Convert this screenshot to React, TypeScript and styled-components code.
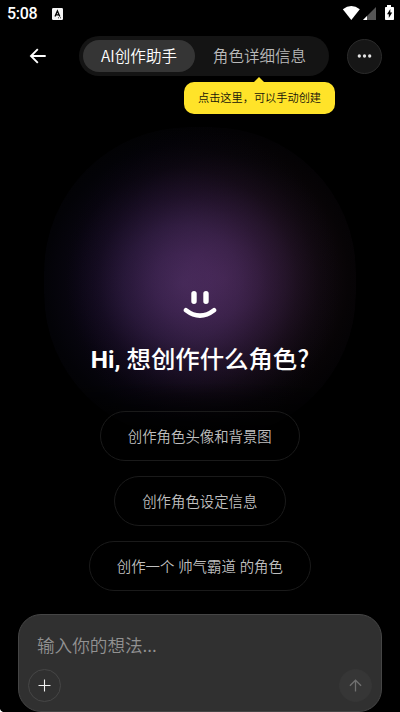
import React from 'react';
import styled, { createGlobalStyle } from 'styled-components';

const GlobalStyle = createGlobalStyle`
  *, *::before, *::after { box-sizing: border-box; }
  body {
    margin: 0;
    background: #000;
    font-family: Roboto, "Noto Sans CJK SC", sans-serif;
    overflow: hidden;
  }
  button { font: inherit; margin: 0; padding: 0; border: 0; background: none; color: inherit; white-space: nowrap; }
`;

const Screen = styled.div`
  position: relative;
  isolation: isolate;
  width: 400px;
  height: 712px;
  overflow: hidden;
  background: #000;
  color: #fff;
  display: flex;
  flex-direction: column;
`;

const Glow = styled.div`
  position: absolute;
  z-index: -1;
  left: 44px;
  top: 127px;
  width: 312px;
  height: 312px;
  border-radius: 145px;
  background:
    radial-gradient(circle 160px at 138px 156px, #291a42 0%, #24163c 18%, #1b1130 36%, #0f091d 54%, #06040d 72%, #020206 86%, #010102 100%),
    radial-gradient(circle 160px at 180px 152px, #2a1526 0%, #241220 22%, #1b0e17 40%, #10080c 58%, #060304 78%, #020102 92%, #010101 100%);
  background-blend-mode: screen;
  mask-image: linear-gradient(#000 82%, transparent 100%);
`;

const StatusBar = styled.header`
  height: 28px;
  display: flex;
  align-items: center;
  padding: 0 6px 0 7px;
`;

const Clock = styled.span`
  width: 45px;
  font-size: 16px;
  font-weight: 500;
  line-height: 28px;
  letter-spacing: -0.3px;
`;

const StatusIcons = styled.div`
  margin-left: auto;
  display: flex;
  height: 28px;
`;

const NavBar = styled.nav`
  height: 56px;
  display: flex;
  align-items: center;
  padding: 0 18px 0 27px;
`;

const BackButton = styled.button`
  display: flex;
  width: 52px;
  height: 22px;
`;

const Tabs = styled.div`
  position: relative;
  display: flex;
  width: 250px;
  height: 40px;
  padding: 4px;
  border-radius: 20px;
  background: #141414;
`;

const Tab = styled.button<{ $active?: boolean }>`
  width: ${p => (p.$active ? 112 : 130)}px;
  padding: 0 ${p => (p.$active ? 0 : 1)}px 2px 0;
  height: 32px;
  line-height: 30px;
  border-radius: 16px;
  font-family: "Noto Sans CJK SC", sans-serif;
  font-size: 15.55px;
  font-weight: 350;
  color: ${p => (p.$active ? '#fff' : '#b9b9b9')};
  background: ${p => (p.$active ? '#353535' : 'transparent')};
`;

const Tooltip = styled.div`
  position: absolute;
  left: 105px;
  top: 46px;
  width: 151px;
  height: 32px;
  border-radius: 10px;
  background: #ffe329;
  color: #15130a;
  font-size: 11.2px;
  font-weight: 350;
  line-height: 34px;
  text-align: center;
  white-space: nowrap;
  &::before {
    content: '';
    position: absolute;
    left: 70px;
    top: -5px;
    border: 5px solid transparent;
    border-top: 0;
    border-bottom-color: #ffe329;
  }
`;

const MoreButton = styled.button`
  margin-left: auto;
  width: 35px;
  height: 35px;
  border: 1px solid #2b2b2b;
  border-radius: 50%;
  background: #161616;
  display: flex;
  align-items: center;
  justify-content: center;
`;

const Hero = styled.main`
  flex: 1;
  display: flex;
  flex-direction: column;
  align-items: center;
  padding-top: 205px;
`;

const Title = styled.h1`
  margin: 21px 0 0;
  height: 40px;
  line-height: 36px;
  font-family: "Noto Sans CJK SC", sans-serif;
  font-size: 24.4px;
  font-weight: 500;
  white-space: nowrap;
`;

const Greeting = styled.span`
  font-family: Roboto, sans-serif;
  font-weight: 700;
`;

const Suggestions = styled.div`
  margin-top: 31px;
  display: flex;
  flex-direction: column;
  align-items: center;
  gap: 15.2px;
`;

const Suggestion = styled.button`
  height: 50px;
  padding: 0 27.4px 2px 27px;
  border: 1px solid #1a1a1a;
  border-radius: 25px;
  font-size: 14.4px;
  font-weight: 350;
  word-spacing: 0.4px;
  color: #bfbfbf;
`;

const Composer = styled.section`
  width: 364px;
  height: 98px;
  margin: 0 auto;
  padding: 14px 9px 9px;
  border: 1px solid #454545;
  border-radius: 23px;
  background: #303030;
`;

const Prompt = styled.div`
  height: 34px;
  padding-left: 9px;
  line-height: 32px;
  font-family: "Noto Sans CJK SC", sans-serif;
  font-size: 17.6px;
  font-weight: 350;
  color: #929292;
`;

const ComposerActions = styled.div`
  display: flex;
  justify-content: space-between;
  margin-top: 6px;
`;

const RoundButton = styled.button<{ $muted?: boolean }>`
  width: 33px;
  height: 33px;
  border-radius: 50%;
  display: flex;
  align-items: center;
  justify-content: center;
  border: 1px solid ${p => (p.$muted ? '#363636' : '#464646')};
  background: ${p => (p.$muted ? '#363636' : 'transparent')};
  color: ${p => (p.$muted ? '#707070' : '#f2f2f2')};
`;

const ScreenCorner = styled.svg`
  position: absolute;
  left: 0;
  bottom: 0;
`;

const suggestions = ['创作角色头像和背景图', '创作角色设定信息', '创作一个 帅气霸道 的角色'];

export default function App() {
  return (
    <>
      <GlobalStyle />
      <Screen>
        <Glow />
        <StatusBar>
          <Clock>5:08</Clock>
          <svg width="11" height="12" viewBox="0 0 11 12">
            <rect width="11" height="12" rx="1.2" fill="#f5f5f5" />
            <path d="M3 8.5 5.4 3 7.8 8.5M3.8 6.8H7" fill="none" stroke="#000" strokeWidth="1.3" />
            <path d="M6 9.8h1M8 9.8h1" stroke="#000" strokeWidth=".8" />
          </svg>
          <StatusIcons>
            <svg width="52" height="28" viewBox="0 0 52 28" fill="#fff">
              <path d="M0.8 9.3Q9.3 2.8 17.8 9.3L9.3 20Z" />
              <path d="M34 7V20H21Z" fill="#555" />
              <path d="M25 16V20H21Z" />
              <path d="M45 5h4v2h2.2q.8 0 .8.8V19.2q0 .8-.8.8h-7.4q-.8 0-.8-.8V7.8q0-.8.8-.8H45Z" />
              <path d="M48.3 9 45 14.2h1.8V18l3.4-5.4h-1.9Z" fill="#000" />
            </svg>
          </StatusIcons>
        </StatusBar>
        <NavBar>
          <BackButton aria-label="返回">
            <svg width="22" height="22" viewBox="0 0 22 22" fill="none" stroke="#fff" strokeWidth="1.9">
              <path d="M18.7 11H4.5M10.8 4.2 4 11l6.8 6.8" />
            </svg>
          </BackButton>
          <Tabs>
            <Tab $active>AI创作助手</Tab>
            <Tab>角色详细信息</Tab>
            <Tooltip>点击这里，可以手动创建</Tooltip>
          </Tabs>
          <MoreButton aria-label="更多">
            <svg width="15" height="5" viewBox="0 0 15 5" fill="#e4e4e4">
              <circle cx="2.3" cy="2" r="1.65" />
              <circle cx="7.5" cy="2" r="1.65" />
              <circle cx="12.7" cy="2" r="1.65" />
            </svg>
          </MoreButton>
        </NavBar>
        <Hero>
          <svg width="34" height="30" viewBox="0 0 34 30" fill="none" stroke="#fff" strokeLinecap="round">
            <path d="M11 4.6v7.6M23 4.6v7.6" strokeWidth="5.4" />
            <path d="M3 21.2Q17 32 31 21.2" strokeWidth="4.6" />
          </svg>
          <Title><Greeting>Hi, </Greeting>想创作什么角色?</Title>
          <Suggestions>
            {suggestions.map(text => <Suggestion key={text}>{text}</Suggestion>)}
          </Suggestions>
        </Hero>
        <Composer>
          <Prompt>输入你的想法...</Prompt>
          <ComposerActions>
            <RoundButton aria-label="添加">
              <svg width="14" height="14" viewBox="0 0 14 14" stroke="currentColor" strokeWidth="1.1">
                <path d="M6.5 .5v12M.5 6.5h12" />
              </svg>
            </RoundButton>
            <RoundButton $muted aria-label="发送">
              <svg width="14" height="14" viewBox="0 0 14 14" fill="none" stroke="currentColor" strokeWidth="1.3">
                <path d="M6.5 12.5V1.3M.9 6.8 6.5 1.2l5.6 5.6" />
              </svg>
            </RoundButton>
          </ComposerActions>
        </Composer>
        <ScreenCorner width="3" height="3" viewBox="0 0 3 3">
          <path d="M0 0Q.4 2.2 3 3H0Z" fill="#fff" />
        </ScreenCorner>
      </Screen>
    </>
  );
}
